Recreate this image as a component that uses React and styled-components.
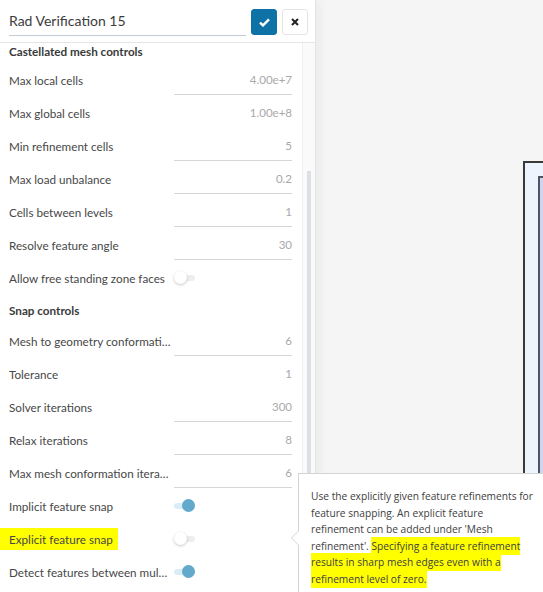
import React from 'react'
import styled, { createGlobalStyle, css } from 'styled-components'

const GlobalStyle = createGlobalStyle`
  html, body {
    margin: 0;
    padding: 0;
    background: #f5f5f5;
  }
  body {
    font-family: Lato, 'Open Sans', sans-serif;
  }
`

const castellated = [
  { label: 'Max local cells', value: '4.00e+7', line: true },
  { label: 'Max global cells', value: '1.00e+8', line: false },
  { label: 'Min refinement cells', value: '5', line: true },
  { label: 'Max load unbalance', value: '0.2', line: true },
  { label: 'Cells between levels', value: '1', line: true },
  { label: 'Resolve feature angle', value: '30', line: true },
  { label: 'Allow free standing zone faces', toggle: false },
]

const snap = [
  { label: 'Mesh to geometry conformation', value: '6', line: true },
  { label: 'Tolerance', value: '1', line: false },
  { label: 'Solver iterations', value: '300', line: true },
  { label: 'Relax iterations', value: '8', line: true },
  { label: 'Max mesh conformation iterations', value: '6', line: true },
  { label: 'Implicit feature snap', toggle: true },
  { label: 'Explicit feature snap', toggle: false, marked: true },
  { label: 'Detect features between multiple surfaces', toggle: true },
]

const Field = ({ row }) => (
  <Row>
    <Label marked={row.marked}>{row.label}</Label>
    {row.value !== undefined ? (
      <Value line={row.line}>{row.value}</Value>
    ) : (
      <Toggle on={row.toggle}>
        <Knob on={row.toggle} />
      </Toggle>
    )}
  </Row>
)

const App = () => {
  return (
    <>
      <GlobalStyle />
      <Screen>
        <Panel>
          <Header>
            <TitleInput>Rad Verification 15</TitleInput>
            <IconButton primary>
              <svg width='11' height='9' viewBox='0 0 11 9'>
                <path d='M1 4.6 L4 7.4 L10 1.4' fill='none' stroke='#fff' strokeWidth='2.4' />
              </svg>
            </IconButton>
            <IconButton>
              <svg width='8' height='8' viewBox='0 0 8 8'>
                <path d='M1 1 L7 7 M7 1 L1 7' stroke='#222' strokeWidth='2' />
              </svg>
            </IconButton>
          </Header>
          <Body>
            <Content>
              <SectionTitle>Castellated mesh controls</SectionTitle>
              {castellated.map((row) => (
                <Field key={row.label} row={row} />
              ))}
              <SectionTitle spaced>Snap controls</SectionTitle>
              {snap.map((row) => (
                <Field key={row.label} row={row} />
              ))}
            </Content>
            <Scrollbar>
              <Thumb />
            </Scrollbar>
          </Body>
        </Panel>
        <Canvas>
          <OuterBox />
          <InnerBox />
        </Canvas>
        <Tooltip>
          <TipText>
            Use the explicitly given feature refinements for
            <br />
            feature snapping. An explicit feature
            <br />
            refinement can be added under 'Mesh
            <br />
            refinement'. <Mark>Specifying a feature refinement
            <br />
            results in sharp mesh edges even with a
            <br />
            refinement level of zero.</Mark>
          </TipText>
        </Tooltip>
      </Screen>
    </>
  )
}

const Screen = styled.div`
  position: relative;
  display: flex;
  width: 543px;
  height: 592px;
  overflow: hidden;
  background: #f5f5f5;
`

const Panel = styled.div`
  position: relative;
  z-index: 1;
  display: flex;
  flex-direction: column;
  flex: 0 0 314px;
  box-sizing: border-box;
  background: #fff;
  border-right: 1px solid #e4e4e4;
  box-shadow: 3px 0 10px rgba(0, 0, 0, 0.05);
`

const Header = styled.div`
  display: flex;
  align-items: flex-start;
  gap: 5px;
  box-sizing: border-box;
  height: 43px;
  padding: 9px 7px 0 9px;
  border-bottom: 1px solid #e6e6e6;
`

const TitleInput = styled.div`
  box-sizing: border-box;
  width: 237px;
  height: 27px;
  padding-top: 3px;
  border-bottom: 1px solid #c3ccd6;
  font-size: 14px;
  line-height: 18px;
  color: #3b3b3b;
`

const IconButton = styled.div`
  display: flex;
  align-items: center;
  justify-content: center;
  box-sizing: border-box;
  width: 26px;
  height: 26px;
  border-radius: 3px;
  border: 1px solid #e4e4e4;
  background: #fff;

  ${({ primary }) =>
    primary &&
    css`
      border-color: #0f72a6;
      background: #0f72a6;
    `}
`

const Body = styled.div`
  display: flex;
  flex: 1;
  min-height: 0;
`

const Content = styled.div`
  flex: 1;
  padding: 0 8px 0 9px;
`

const Scrollbar = styled.div`
  position: relative;
  flex: 0 0 12px;
  border-left: 1px solid #efefef;
  background: #fafafa;
`

const Thumb = styled.div`
  margin: 128px 0 0 4px;
  width: 4px;
  height: 500px;
  background: #dcdfe4;
`

const SectionTitle = styled.div`
  height: 20px;
  font-size: 11.7px;
  font-weight: 700;
  line-height: 17px;
  color: #3a3a3a;

  ${({ spaced }) =>
    spaced &&
    css`
      height: 30px;
      padding-top: 8px;
      box-sizing: border-box;
    `}
`

const Row = styled.div`
  display: grid;
  grid-template-columns: 165px 118px;
  align-items: center;
  height: 33px;
`

const Label = styled.div`
  overflow: hidden;
  white-space: nowrap;
  text-overflow: ellipsis;
  font-size: 11.7px;
  color: #474747;

  ${({ marked }) =>
    marked &&
    css`
      justify-self: start;
      margin-left: -9px;
      padding: 4px 5px 4px 9px;
      background: #ffff00;
    `}
`

const Value = styled.div`
  box-sizing: border-box;
  height: 32px;
  align-self: start;
  padding-top: 9px;
  text-align: right;
  font-size: 11.5px;
  line-height: 15px;
  color: #a9a9a9;
  border-bottom: 1px solid ${({ line }) => (line ? '#d6d6d6' : 'transparent')};
`

const Toggle = styled.div`
  position: relative;
  width: 21px;
  height: 6px;
  border-radius: 3px;
  background: ${({ on }) => (on ? '#d9edf6' : '#eeeeee')};
`

const Knob = styled.div`
  position: absolute;
  top: -4px;
  width: 13px;
  height: 13px;
  border-radius: 50%;
  ${({ on }) =>
    on
      ? css`
          left: 8px;
          background: #62a9cc;
        `
      : css`
          left: 0;
          background: #fff;
          box-shadow: 0 1px 3px rgba(0, 0, 0, 0.22);
        `}
`

const Canvas = styled.div`
  position: relative;
  flex: 1;
`

const OuterBox = styled.div`
  position: absolute;
  left: 207px;
  top: 161px;
  width: 60px;
  height: 500px;
  border: 2px solid #3a3a3a;
  background: #eef4fe;
`

const InnerBox = styled.div`
  position: absolute;
  left: 222px;
  top: 176px;
  width: 60px;
  height: 500px;
  border: 2px solid #50545e;
  background: #cfd5ee;
`

const Tooltip = styled.div`
  position: absolute;
  z-index: 2;
  left: 298px;
  top: 473px;
  width: 260px;
  height: 140px;
  box-sizing: border-box;
  padding: 14px 0 0 12px;
  background: #fff;
  border: 1px solid #d4d4d4;

  &::before,
  &::after {
    content: '';
    position: absolute;
    top: 56px;
    border: 8px solid transparent;
    border-left: 0;
  }
  &::before {
    left: -8px;
    border-right-color: #d4d4d4;
  }
  &::after {
    left: -7px;
    border-right-color: #fff;
  }
`

const TipText = styled.div`
  white-space: nowrap;
  font-family: 'Open Sans', Lato, sans-serif;
  font-size: 10.2px;
  line-height: 16.6px;
  color: #404040;
`

const Mark = styled.span`
  background: #ffff00;
  padding: 2px 0;
  box-decoration-break: clone;
  -webkit-box-decoration-break: clone;
`

export default App
